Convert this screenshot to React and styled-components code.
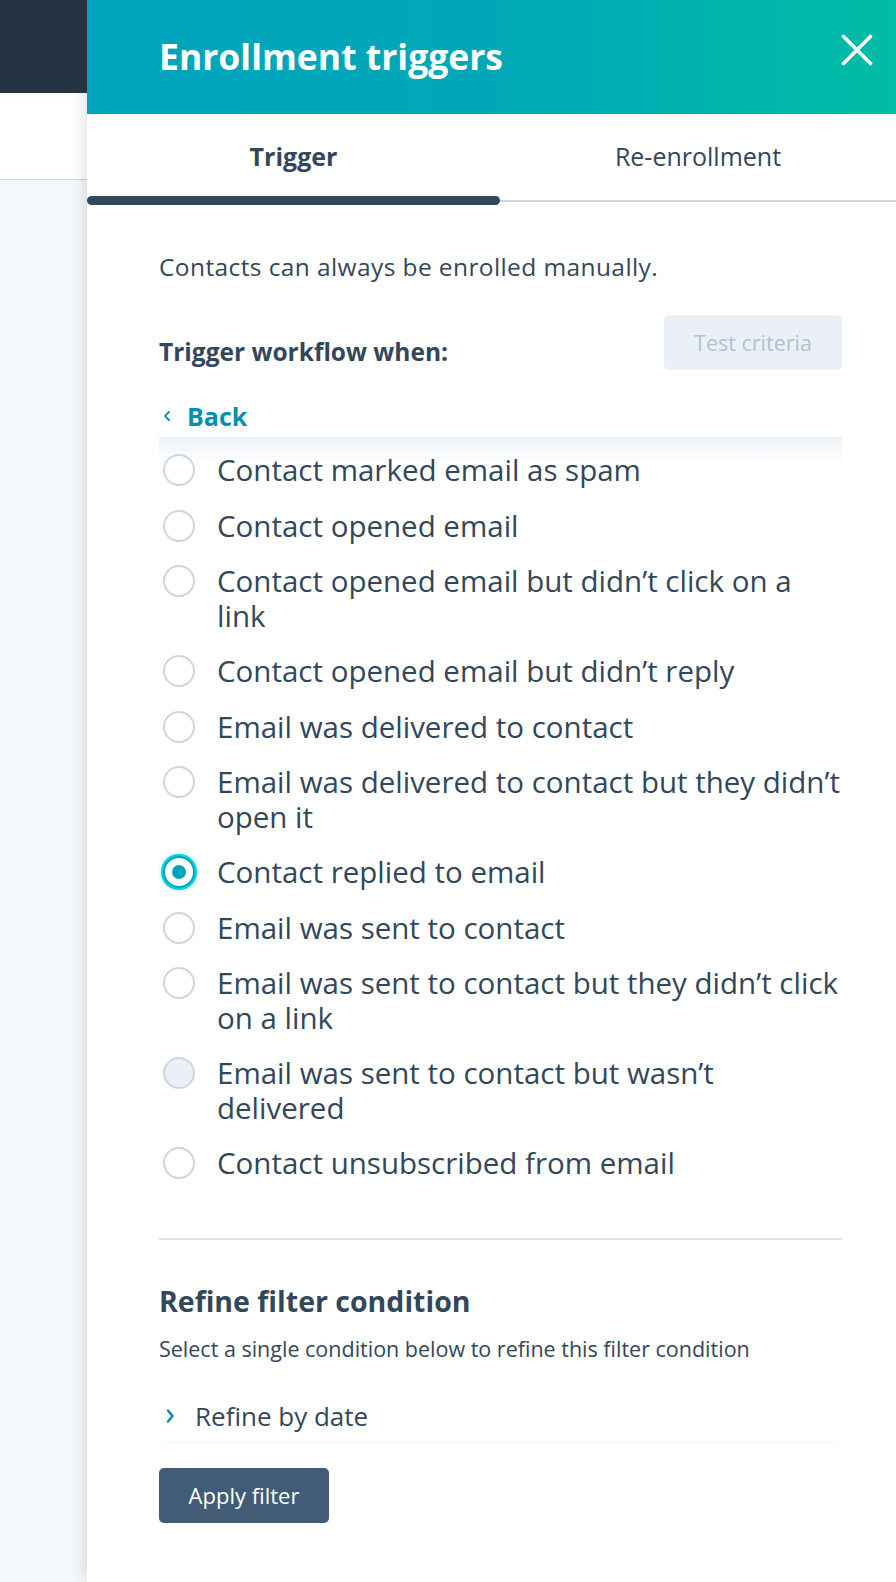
import React from "react";
import styled, { createGlobalStyle } from "styled-components";

const GlobalStyle = createGlobalStyle`
  html, body {
    margin: 0;
    padding: 0;
    overflow: hidden;
    background: #f5f8fa;
  }
  body {
    font-family: "Open Sans", "Noto Sans", sans-serif;
    color: #33475b;
  }
  * {
    box-sizing: border-box;
  }
`;

// line breaks follow the panel's wrapping in the original
const triggers = [
  { id: 1, label: "Contact marked email as spam" },
  { id: 2, label: "Contact opened email" },
  { id: 3, label: "Contact opened email but didn\u2019t click on a\nlink" },
  { id: 4, label: "Contact opened email but didn\u2019t reply" },
  { id: 5, label: "Email was delivered to contact" },
  { id: 6, label: "Email was delivered to contact but they didn\u2019t\nopen it" },
  { id: 7, label: "Contact replied to email", checked: true },
  { id: 8, label: "Email was sent to contact" },
  { id: 9, label: "Email was sent to contact but they didn\u2019t click\non a link" },
  { id: 10, label: "Email was sent to contact but wasn\u2019t\ndelivered", disabled: true },
  { id: 11, label: "Contact unsubscribed from email" },
];

function App() {
  return (
    <Page>
      <GlobalStyle />
      <Backdrop>
        <TopBar />
        <SubBar />
        <Canvas />
      </Backdrop>
      <Panel>
        <Header>
          <Title>Enrollment triggers</Title>
          <CloseButton aria-label="Close">
            <svg width="32" height="32" viewBox="0 0 32 32">
              <path
                d="M2.5 2.5 L29.5 29.5 M29.5 2.5 L2.5 29.5"
                stroke="#fff"
                strokeWidth="3.6"
                strokeLinecap="round"
              />
            </svg>
          </CloseButton>
        </Header>

        <Tabs>
          <Tab $active>Trigger</Tab>
          <Tab>Re-enrollment</Tab>
        </Tabs>

        <Body>
          <Intro>Contacts can always be enrolled manually.</Intro>

          <CriteriaRow>
            <Label>Trigger workflow when:</Label>
            <TestButton disabled>Test criteria</TestButton>
          </CriteriaRow>

          <BackLink>
            <svg width="8" height="12" viewBox="0 0 8 12">
              <path
                d="M6 2 L2 6 L6 10"
                fill="none"
                stroke="#0091ae"
                strokeWidth="1.8"
                strokeLinecap="round"
                strokeLinejoin="round"
              />
            </svg>
            Back
          </BackLink>

          <OptionList>
            {triggers.map((item) => (
              <Option key={item.id}>
                <Radio $checked={item.checked} $disabled={item.disabled} />
                <OptionText>{item.label}</OptionText>
              </Option>
            ))}
          </OptionList>

          <Divider />

          <SectionTitle>Refine filter condition</SectionTitle>
          <SectionHint>
            Select a single condition below to refine this filter condition
          </SectionHint>

          <Refine>
            <svg width="10" height="18" viewBox="0 0 10 18">
              <path
                d="M3 3.5 L7.5 9 L3 14.5"
                fill="none"
                stroke="#0091ae"
                strokeWidth="2.5"
                strokeLinecap="round"
                strokeLinejoin="round"
              />
            </svg>
            Refine by date
          </Refine>

          <ApplyButton>Apply filter</ApplyButton>
        </Body>
      </Panel>
    </Page>
  );
}

const Page = styled.div`
  display: flex;
  width: 100%;
  height: 1582px;
  overflow: hidden;
`;

const Backdrop = styled.div`
  display: flex;
  flex-direction: column;
  width: 87px;
  flex-shrink: 0;
`;

const TopBar = styled.div`
  height: 93px;
  background: #253342;
`;

const SubBar = styled.div`
  height: 87px;
  background: #fff;
  border-bottom: 1px solid #cbd6e2;
`;

const Canvas = styled.div`
  flex: 1;
  background: #f5f8fa;
`;

const Panel = styled.section`
  position: relative;
  flex: 1;
  display: flex;
  flex-direction: column;
  background: #fff;
  box-shadow: -6px 0 14px -4px rgba(45, 62, 80, 0.18);
`;

const Header = styled.header`
  display: flex;
  align-items: center;
  justify-content: space-between;
  height: 114px;
  padding: 0 23px 0 72px;
  background: linear-gradient(90deg, #00a4bd 0%, #00a9b6 55%, #00bda5 100%);
`;

const Title = styled.h1`
  margin: 0 0 3px;
  color: #fff;
  font-size: 35.5px;
  font-weight: 700;
`;

const CloseButton = styled.button`
  display: flex;
  padding: 0;
  border: 0;
  background: none;
  cursor: pointer;
  margin-bottom: 15px;
`;

const Tabs = styled.nav`
  display: grid;
  grid-template-columns: 413px 1fr;
  height: 88px;
  border-bottom: 2px solid #cbd6e2;
`;

const Tab = styled.div`
  position: relative;
  display: flex;
  align-items: center;
  justify-content: center;
  padding-bottom: 2px;
  font-size: 25px;
  font-weight: ${(p) => (p.$active ? 700 : 400)};
  color: #33475b;

  &::after {
    content: "";
    display: ${(p) => (p.$active ? "block" : "none")};
    position: absolute;
    left: 0;
    right: 0;
    bottom: -5px;
    height: 9px;
    border-radius: 5px;
    background: #33475b;
  }
`;

const Body = styled.div`
  display: flex;
  flex-direction: column;
  padding: 49px 54px 0 72px;
`;

const Intro = styled.p`
  margin: 0;
  font-size: 24.5px;
  line-height: 32px;
  letter-spacing: 0.4px;
`;

const CriteriaRow = styled.div`
  display: flex;
  align-items: flex-end;
  justify-content: space-between;
  margin-top: 32px;
`;

const Label = styled.span`
  margin-bottom: 2px;
  font-size: 24.5px;
  font-weight: 700;
  line-height: 32px;
`;

const TestButton = styled.button`
  width: 178px;
  height: 55px;
  border: 0;
  border-radius: 5px;
  background: #eaf0f6;
  color: #b0c1d4;
  font-family: inherit;
  font-size: 21.5px;
`;

const BackLink = styled.a`
  display: flex;
  align-items: center;
  gap: 16px;
  margin-top: 31px;
  padding-left: 4px;
  font-size: 25px;
  font-weight: 700;
  line-height: 30px;
  color: #0091ae;
`;

const OptionList = styled.ul`
  display: flex;
  flex-direction: column;
  gap: 21px;
  margin: 6px 0 0;
  padding: 16px 0 0;
  list-style: none;
  background: linear-gradient(180deg, #eef2f6 0px, #fff 28px);
`;

const Option = styled.li`
  display: flex;
  align-items: flex-start;
  gap: 22px;
  padding-left: 4px;
`;

const Radio = styled.span`
  position: relative;
  flex-shrink: 0;
  width: 32px;
  height: 32px;
  margin-top: 1px;
  border-radius: 50%;
  border: 2px solid ${(p) => (p.$checked ? "#00a4bd" : "#cbd6e2")};
  background: ${(p) => (p.$disabled ? "#eaf0f6" : "#fff")};
  box-shadow: ${(p) =>
    p.$checked ? "0 0 0 2px #00d0e4, 0 0 4px 2px rgba(0, 208, 228, 0.4)" : "none"};

  &::after {
    content: "";
    display: ${(p) => (p.$checked ? "block" : "none")};
    position: absolute;
    top: 50%;
    left: 50%;
    width: 14px;
    height: 14px;
    margin: -7px 0 0 -7px;
    border-radius: 50%;
    background: #00a4bd;
  }
`;

const OptionText = styled.span`
  font-size: 29.5px;
  line-height: 34.5px;
  white-space: pre-line;
`;

const Divider = styled.hr`
  margin: 57px 0 0;
  border: 0;
  border-top: 2px solid #dfe3eb;
`;

const SectionTitle = styled.h2`
  margin: 43px 0 0;
  font-size: 28.5px;
  font-weight: 700;
  line-height: 36px;
`;

const SectionHint = styled.p`
  margin: 16px 0 0;
  font-size: 21.5px;
  line-height: 28px;
`;

const Refine = styled.div`
  display: flex;
  align-items: center;
  gap: 20px;
  margin-top: 37px;
  padding: 0 0 9px 6px;
  font-size: 26px;
  line-height: 32px;
  box-shadow: 0 6px 6px -6px rgba(45, 62, 80, 0.08);
`;

const ApplyButton = styled.button`
  align-self: flex-start;
  margin-top: 27px;
  width: 170px;
  height: 55px;
  border: 0;
  border-radius: 5px;
  background: #425b76;
  color: #fff;
  font-family: inherit;
  font-size: 22px;
`;

export default App;
